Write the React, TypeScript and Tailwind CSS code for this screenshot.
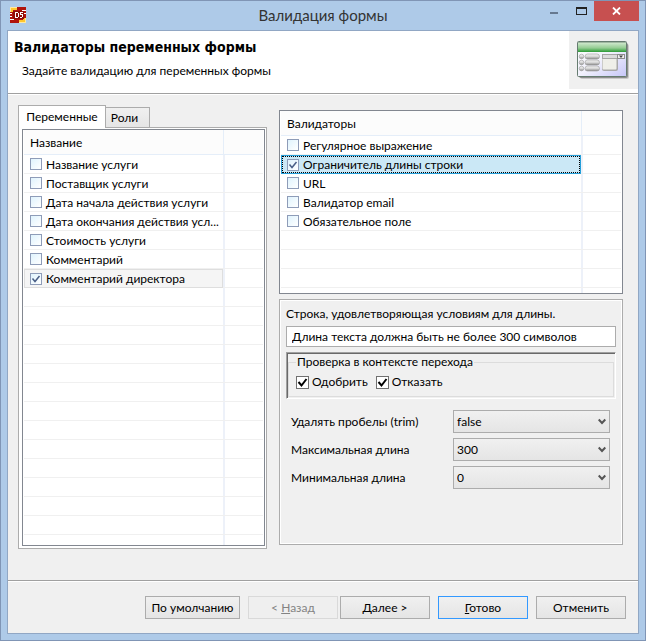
import React, { useId, useState } from "react";

type Item = { label: string; checked?: boolean };

const variables: Item[] = [
  { label: "Название услуги" },
  { label: "Поставщик услуги" },
  { label: "Дата начала действия услуги" },
  { label: "Дата окончания действия усл..." },
  { label: "Стоимость услуги" },
  { label: "Комментарий" },
  { label: "Комментарий директора", checked: true },
];

const validators: Item[] = [
  { label: "Регулярное выражение" },
  { label: "Ограничитель длины строки", checked: true },
  { label: "URL" },
  { label: "Валидатор email" },
  { label: "Обязательное поле" },
];

function AppLogo() {
  return (
    <svg width="16" height="16" viewBox="0 0 16 16" shapeRendering="crispEdges" aria-hidden="true">
      <path fill="#b0140c" d="M0 0h16v16H0z" />
      <path fill="#ffe9a0" d="M0 0h7v1H1v4H0zM9 15h6v-4h1v5H9z" />
      <path fill="#ffc62e" d="M1 1h6v2H3v2H1zM9 13h4v-2h2v4H9z" />
      <path fill="#fff" d="M12 3h4v1h-4zM14 6h2v1h-2zM0 6h2v1H0zM0 9h2v1H0zM0 12h4v1H0z" />
      <path fill="#8f0d08" d="M3 4h11v8H3z" />
      <path fill="#fff" d="M5 5h2v1H6v4h1v1H5zM7 5h1v1H7zM7 10h1v1H7zM8 6h1v4H8zM10 5h3v1h-2v1h2v1h-3zM12 8h1v2h-1zM10 10h2v1h-2z" />
    </svg>
  );
}

function FormIcon() {
  return (
    <svg width="56" height="42" viewBox="0 0 56 42" aria-hidden="true">
      <defs>
        <linearGradient id="bar" x1="0" y1="0" x2="0" y2="1">
          <stop offset="0" stopColor="#d8ecd6" />
          <stop offset="0.6" stopColor="#94cc92" />
          <stop offset="1" stopColor="#2a9a34" />
        </linearGradient>
        <linearGradient id="face" x1="0" y1="0" x2="1" y2="1">
          <stop offset="0" stopColor="#ffffff" />
          <stop offset="0.5" stopColor="#f1f1fc" />
          <stop offset="1" stopColor="#c6c6f8" />
        </linearGradient>
        <linearGradient id="pill" x1="0" y1="0" x2="0" y2="1">
          <stop offset="0" stopColor="#f4f4f4" />
          <stop offset="0.5" stopColor="#d6d6d6" />
          <stop offset="1" stopColor="#8a8a8a" />
        </linearGradient>
      </defs>
      <rect x="4" y="4" width="49" height="35" rx="2" fill="#c9c9c9" />
      <rect x="3" y="3" width="49" height="35" rx="2" fill="#8d8d8d" />
      <rect x="1.500" y="1.500" width="49" height="35" rx="1" fill="url(#face)" stroke="#667c70" />
      <rect x="2" y="2" width="48" height="10" fill="url(#bar)" />
      <path d="M2 2.500h48" stroke="#9fb8a0" />
      {[16.5, 22.5, 28.5].map((y) => (
        <g key={y}>
          <circle cx="5.500" cy={y} r="2.300" fill="url(#pill)" stroke="#9a9a9a" strokeWidth="0.600" />
          <rect x="9" y={y - 2.5} width="14.500" height="5" rx="2.500" fill="url(#pill)" stroke="#9a9a9a" strokeWidth="0.600" />
        </g>
      ))}
      <rect x="26" y="18" width="16" height="13" rx="2" fill="#a9a9a9" />
      <rect x="26.500" y="18" width="14" height="11.500" rx="1" fill="#efefe9" />
      <rect x="26.500" y="14.500" width="22" height="4" fill="#dcdcdc" stroke="#a5a5a5" />
      <rect x="41.500" y="14.500" width="7" height="4" fill="#eee" stroke="#8c8c8c" />
      <path d="M43 15.500h4l-2 2.500z" fill="#444" />
    </svg>
  );
}

function ListCheckbox({ id, checked }: { id: string; checked?: boolean }) {
  return (
    <span className="grid size-3 shrink-0">
      <input
        id={id}
        type="checkbox"
        defaultChecked={checked}
        className="peer col-start-1 row-start-1 size-3 appearance-none border border-[#8e9cb8] bg-linear-to-br from-[#dff3fd] to-white"
      />
      <svg
        viewBox="0 0 12 12"
        className="pointer-events-none invisible col-start-1 row-start-1 size-3 peer-checked:visible"
        aria-hidden="true"
      >
        <path d="M2.500 5.500l2.500 3L9.500 3" fill="none" stroke="#4a5f87" strokeWidth="1.500" />
      </svg>
    </span>
  );
}

function DialogCheckbox({ label }: { label: string }) {
  const id = useId();
  return (
    <div className="flex items-center gap-[3px]">
      <span className="grid size-[13px]">
        <input
          id={id}
          type="checkbox"
          defaultChecked
          className="peer col-start-1 row-start-1 size-[13px] appearance-none border border-[#707070] bg-white"
        />
        <svg
          viewBox="0 0 13 13"
          className="pointer-events-none invisible col-start-1 row-start-1 size-[13px] peer-checked:visible"
          aria-hidden="true"
        >
          <path d="M2.500 6l3 3.500L10.500 3" fill="none" stroke="#000" strokeWidth="2" />
        </svg>
      </span>
      <label htmlFor={id}>{label}</label>
    </div>
  );
}

function CheckTable({
  title,
  items,
  blanks,
  rest,
  focused,
}: {
  title: string;
  items: Item[];
  blanks: number;
  rest: string;
  focused?: boolean;
}) {
  const id = useId();
  const side = "border-l-2 border-[#edf1f9]";
  const selected = focused
    ? "border border-[#26a0da] bg-[#cbe8f6] outline outline-dotted outline-black -outline-offset-2"
    : "border border-[#dedede] bg-[#f5f5f5]";
  return (
    <div className="border border-[#828790] bg-white px-px">
      <table className="w-full table-fixed border-separate border-spacing-0">
        <colgroup>
          <col />
          <col className="w-[40px]" />
        </colgroup>
        <thead>
          <tr className="h-[25px] bg-[#fcfcfc]">
            <th scope="col" className="border-b border-[#e5eef9] p-0 pt-[2px] pl-[6px] text-left font-normal">
              {title}
            </th>
            <td className="border-b border-l border-[#e5eef9] p-0" />
          </tr>
        </thead>
        <tbody>
          {items.map((item, i) => (
            <tr key={item.label} className="h-[19px]">
              <td className={"p-0 " + (item.checked ? selected : "border-b border-[#f0f0f0]")}>
                <div className={"flex items-center gap-1 " + (item.checked ? "h-[17px] pl-[5px]" : "h-[18px] pl-[6px]")}>
                  <ListCheckbox id={id + i} checked={item.checked} />
                  <label htmlFor={id + i} className="leading-[17px] whitespace-nowrap">
                    {item.label}
                  </label>
                </div>
              </td>
              <td className="border-b border-[#f0f0f0] p-0">
                <div className={"h-[18px] " + side} />
              </td>
            </tr>
          ))}
          {Array.from({ length: blanks }, (_, i) => (
            <tr key={i} className="h-[19px]">
              <td className="border-b border-[#f0f0f0] p-0" />
              <td className="border-b border-[#f0f0f0] p-0">
                <div className={"h-[18px] " + side} />
              </td>
            </tr>
          ))}
          <tr>
            <td className="p-0" />
            <td className="p-0">
              <div className={rest + " " + side} />
            </td>
          </tr>
        </tbody>
      </table>
    </div>
  );
}

function SelectRow({ label, options }: { label: string; options: string[] }) {
  const id = useId();
  return (
    <div className="flex items-center justify-between">
      <label htmlFor={id}>{label}</label>
      <div className="grid w-[157px]">
        <select
          id={id}
          className="col-start-1 row-start-1 h-[23px] w-full appearance-none border border-[#acacac] bg-linear-to-b from-[#f0f0f0] to-[#e5e5e5] px-[3px]"
        >
          {options.map((o) => (
            <option key={o}>{o}</option>
          ))}
        </select>
        <svg
          width="8"
          height="8"
          viewBox="0 0 8 8"
          className="pointer-events-none col-start-1 row-start-1 mr-1 self-center justify-self-end"
          aria-hidden="true"
        >
          <path d="M0.700 1.500L4 5l3.300-3.500" fill="none" stroke="#555" strokeWidth="2" />
        </svg>
      </div>
    </div>
  );
}

const buttonBase = "h-[23px] border bg-linear-to-b from-[#f0f0f0] to-[#e5e5e5]";

export default function App() {
  const [message, setMessage] = useState("Длина текста должна быть не более 300 символов");
  return (
    <div className="flex min-h-screen flex-col border border-[#8095b5] bg-[#aecae8] px-[6px] pb-[6px] font-['Lato','Open_Sans',sans-serif] text-[12px] leading-4 text-black">
      <header className="grid h-[29px] grid-cols-[1fr_auto_1fr] items-start">
        <div className="pt-[6px] pl-[3px]">
          <AppLogo />
        </div>
        <h1 className="pt-1 text-[15px] leading-5 text-[#333]">Валидация формы</h1>
        <div className="flex justify-end">
          <button aria-label="Свернуть" className="flex h-5 w-[28px] items-center justify-center">
            <span className="mt-1 h-[2px] w-2 bg-[#66788f]" />
          </button>
          <button aria-label="Развернуть" className="flex h-5 w-[26px] items-center justify-center">
            <span className="h-2 w-[11px] border border-t-2 border-[#222]" />
          </button>
          <button aria-label="Закрыть" className="flex h-5 w-[45px] items-center justify-center bg-[#c75050]">
            <svg width="9" height="8" viewBox="0 0 9 8" aria-hidden="true">
              <path d="M1 0.500l7 7M8 0.500l-7 7" stroke="#fff" strokeWidth="1.800" />
            </svg>
          </button>
        </div>
      </header>

      <main className="flex flex-1 flex-col border border-[#91a7c4] bg-[#f0f0f0]">
        <section className="flex h-[63px] justify-between border-b border-[#a0a0a0] bg-white">
          <div className="pt-2">
            <h2 className="pl-[6px] font-['DejaVu_Sans_Condensed','DejaVu_Sans',sans-serif] text-[14px] leading-4 font-bold">
              Валидаторы переменных формы
            </h2>
            <p className="pt-2 pl-[14px]">Задайте валидацию для переменных формы</p>
          </div>
          <div className="h-[58px] w-[69px] bg-[#f0f0f0] pt-[9px] pl-[7px]">
            <FormIcon />
          </div>
        </section>

        <div className="grid flex-1 grid-cols-[249fr_344fr] items-start gap-3 border-t border-white pt-[10px] pr-[15px] pb-[31px] pl-[10px]">
          <div>
            <div role="tablist" className="flex items-end">
              <button
                role="tab"
                aria-selected="true"
                className="relative -mb-px h-[23px] w-[88px] border border-b-0 border-[#acacac] bg-white"
              >
                Переменные
              </button>
              <button
                role="tab"
                aria-selected="false"
                className="h-5 w-11 border border-b-0 border-l-0 border-[#acacac] bg-linear-to-b from-[#f0f0f0] to-[#e5e5e5] pt-px pr-[6px]"
              >
                Роли
              </button>
            </div>
            <div role="tabpanel" className="border border-[#acacac] bg-white px-[3px] pt-px pr-px pb-[2px]">
              <CheckTable title="Название" items={variables} blanks={13} rest="h-[10px]" />
            </div>
          </div>

          <div className="flex flex-col gap-[5px] pt-[5px]">
            <CheckTable title="Валидаторы" items={validators} blanks={3} rest="h-[5px]" focused />

            <section className="h-[246px] border border-[#acacac]">
              <div className="h-full border border-white px-[5px] pt-[5px]">
                <label htmlFor="message" className="block">
                  Строка, удовлетворяющая условиям для длины.
                </label>
                <input
                  id="message"
                  type="text"
                  value={message}
                  onChange={(e) => setMessage(e.target.value)}
                  className="mt-1 block h-[21px] w-full border border-[#acacac] bg-white px-[5px]"
                />
                <div className="mt-[5px] border border-t-[#a0a0a0] border-r-white border-b-white border-l-[#a0a0a0]">
                  <div className="border-t border-l border-[#696969] pr-px pb-px">
                    <fieldset className="h-[43px] border border-[#dcdcdc] px-[7px]">
                      <legend className="px-px">Проверка в контексте перехода</legend>
                      <div className="flex gap-2 pt-1">
                        <DialogCheckbox label="Одобрить" />
                        <DialogCheckbox label="Отказать" />
                      </div>
                    </fieldset>
                  </div>
                </div>
                <div className="mt-[11px] flex flex-col gap-[5px] pr-[6px] pl-[5px]">
                  <SelectRow label="Удалять пробелы (trim)" options={["false", "true"]} />
                  <SelectRow label="Максимальная длина" options={["300"]} />
                  <SelectRow label="Минимальная длина" options={["0"]} />
                </div>
              </div>
            </section>
          </div>
        </div>

        <footer className="border-t border-[#a0a0a0]">
          <div className="flex justify-end border-t border-white pt-[14px] pr-3 pb-[14px]">
            <button className={buttonBase + " mr-2 w-[95px] border-[#acacac]"}>По умолчанию</button>
            <button disabled className="mr-[2px] h-[23px] w-[90px] border border-[#d9d9d9] bg-[#efefef] text-[#838383]">
              &lt; <span className="underline">Н</span>азад
            </button>
            <button className={buttonBase + " mr-2 w-[90px] border-[#acacac]"}>
              <span className="underline">Д</span>алее &gt;
            </button>
            <button className={buttonBase + " mr-2 w-[90px] border-[#3399ff]"}>
              <span className="underline">Г</span>отово
            </button>
            <button className={buttonBase + " w-[90px] border-[#acacac]"}>Отменить</button>
          </div>
        </footer>
      </main>
    </div>
  );
}
